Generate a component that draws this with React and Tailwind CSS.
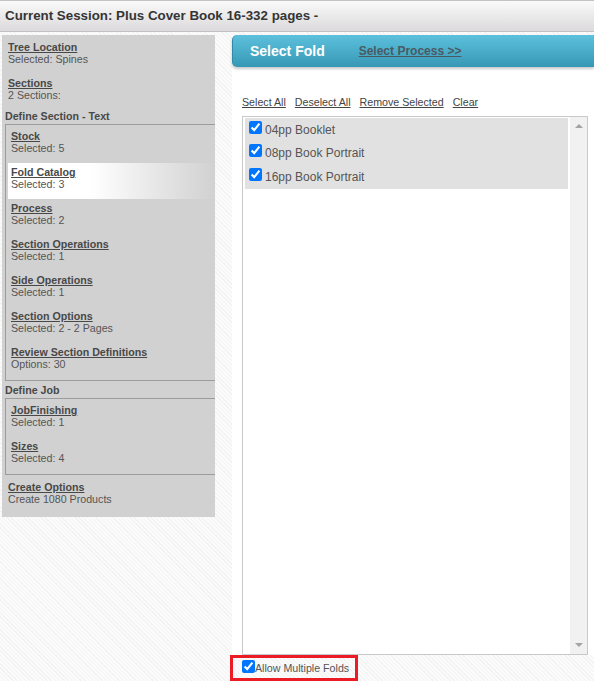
import React from 'react';

const TOP_ITEMS = [
  { title: 'Tree Location', text: 'Selected: Spines' },
  { title: 'Sections', text: '2 Sections:' },
];

const SECTION_ITEMS = [
  { title: 'Stock', text: 'Selected: 5' },
  { title: 'Fold Catalog', text: 'Selected: 3', active: true },
  { title: 'Process', text: 'Selected: 2' },
  { title: 'Section Operations', text: 'Selected: 1' },
  { title: 'Side Operations', text: 'Selected: 1' },
  { title: 'Section Options', text: 'Selected: 2 - 2 Pages' },
  { title: 'Review Section Definitions', text: 'Options: 30' },
];

const JOB_ITEMS = [
  { title: 'JobFinishing', text: 'Selected: 1' },
  { title: 'Sizes', text: 'Selected: 4' },
];

const FOLDS = ['04pp Booklet', '08pp Book Portrait', '16pp Book Portrait'];

const NavItem = ({ title, text, active }) => (
  <div
    className={`ml-[2px] pl-[3px] pt-[3px] pb-[9px] ${
      active ? 'bg-gradient-to-r from-white from-[40%] to-[#d1d1d1]' : ''
    }`}
  >
    <a href="#" className="block font-bold text-[#484848] underline">
      {title}
    </a>
    <div>{text}</div>
  </div>
);

const Sidebar = () => (
  <aside className="ml-[2px] w-[213px] h-[482px] shrink-0 bg-[#d1d1d1] pt-[6px] text-[10.67px] leading-[12px] text-[#555]">
    <div className="pl-[6px]">
      {TOP_ITEMS.map((it, i) => (
        <div key={it.title} className={i === 0 ? 'mb-[12px]' : ''}>
          <a href="#" className="block font-bold text-[#484848] underline">
            {it.title}
          </a>
          <div>{it.text}</div>
        </div>
      ))}
    </div>

    <div className="mt-[9px] pl-[3px] font-bold text-[#484848]">Define Section - Text</div>
    <div className="mt-[2px] ml-[3px] border-t border-l border-b border-[#9c9c9c] pt-[2px] pb-[1px]">
      {SECTION_ITEMS.map((it) => (
        <NavItem key={it.title} {...it} />
      ))}
    </div>

    <div className="mt-[3px] pl-[3px] font-bold text-[#484848]">Define Job</div>
    <div className="mt-[2px] ml-[3px] border-t border-l border-b border-[#9c9c9c] pt-[2px] pb-[1px]">
      {JOB_ITEMS.map((it) => (
        <NavItem key={it.title} {...it} />
      ))}
    </div>

    <div className="mt-[6px] pl-[6px]">
      <a href="#" className="block font-bold text-[#484848] underline">
        Create Options
      </a>
      <div>Create 1080 Products</div>
    </div>
  </aside>
);

const Arrow = ({ up }) => (
  <svg width="8" height="4" viewBox="0 0 8 4">
    <path d={up ? 'M0 4 L4 0 L8 4Z' : 'M0 0 L4 4 L8 0Z'} fill="#a3a3a3" />
  </svg>
);

export default function App() {
  return (
    <div className="min-h-screen w-full font-['Liberation_Sans',Arial,sans-serif] bg-[repeating-linear-gradient(45deg,#f3f3f3_0px,#f3f3f3_1px,#fbfbfb_1px,#fbfbfb_3px)]">
      {/* Session header */}
      <header className="h-[32px] flex items-center pl-[5px] border-t border-b border-[#c2c2c2] bg-gradient-to-b from-[#fafafa] to-[#dcdadc] text-[13.33px] font-bold text-[#353535]">
        Current Session: Plus Cover Book 16-332 pages -
      </header>

      <div className="flex mt-[3px]">
        <Sidebar />

        <main className="ml-[17px] flex-1 flex flex-col">
          <div className="h-[620px] bg-white flex flex-col">
            {/* Step bar */}
            <div className="h-[32px] flex items-center pl-[17px] rounded-l-[5px] border-l border-[#2f8aa6] bg-gradient-to-b from-[#5cc1de] to-[#3798b5] shadow-[0_2px_3px_rgba(0,0,0,0.22)]">
              <span className="text-[14px] font-bold text-white">Select Fold</span>
              <a href="#" className="ml-[34px] text-[12px] font-bold text-[#4a5a62] underline">
                Select Process &gt;&gt;
              </a>
            </div>

            {/* List actions */}
            <div className="mt-[29px] pl-[10px] flex gap-[9px] text-[10.67px] leading-[13px] text-[#444]">
              <a href="#" className="underline">Select All</a>
              <a href="#" className="underline">Deselect All</a>
              <a href="#" className="underline">Remove Selected</a>
              <a href="#" className="underline">Clear</a>
            </div>

            {/* Fold list */}
            <div className="mt-[7px] ml-[10px] w-[346px] flex-1 flex border border-[#c9c9c9]">
              <div className="flex-1 pl-[2px] pr-[2px] pt-[1px]">
                <div className="bg-[#e1e1e1] pb-[1px]">
                  {FOLDS.map((f, i) => (
                    <label
                      key={f}
                      className={`flex items-start pl-[4px] ${i === 1 ? 'h-[24px]' : 'h-[23px]'}`}
                    >
                      <input type="checkbox" defaultChecked className="mt-[3px] w-[13px] h-[13px]" />
                      <span className="ml-[3px] text-[12px] leading-[24px] text-[#555]">{f}</span>
                    </label>
                  ))}
                </div>
              </div>
              <div className="w-[17px] bg-[#f1f1f1] flex flex-col items-center justify-between pt-[7px] pb-[7px]">
                <Arrow up />
                <Arrow />
              </div>
            </div>
          </div>

          {/* Allow multiple folds */}
          <div className="-ml-[2px] w-[128px] h-[26px] border-[3px] border-[#ec1c24] pl-[9px] pt-[1px] flex items-start">
            <input type="checkbox" defaultChecked className="w-[13px] h-[13px] mt-[1px]" />
            <span className="text-[10.67px] leading-[19px] text-[#555]">Allow Multiple Folds</span>
          </div>
        </main>
      </div>
    </div>
  );
}
